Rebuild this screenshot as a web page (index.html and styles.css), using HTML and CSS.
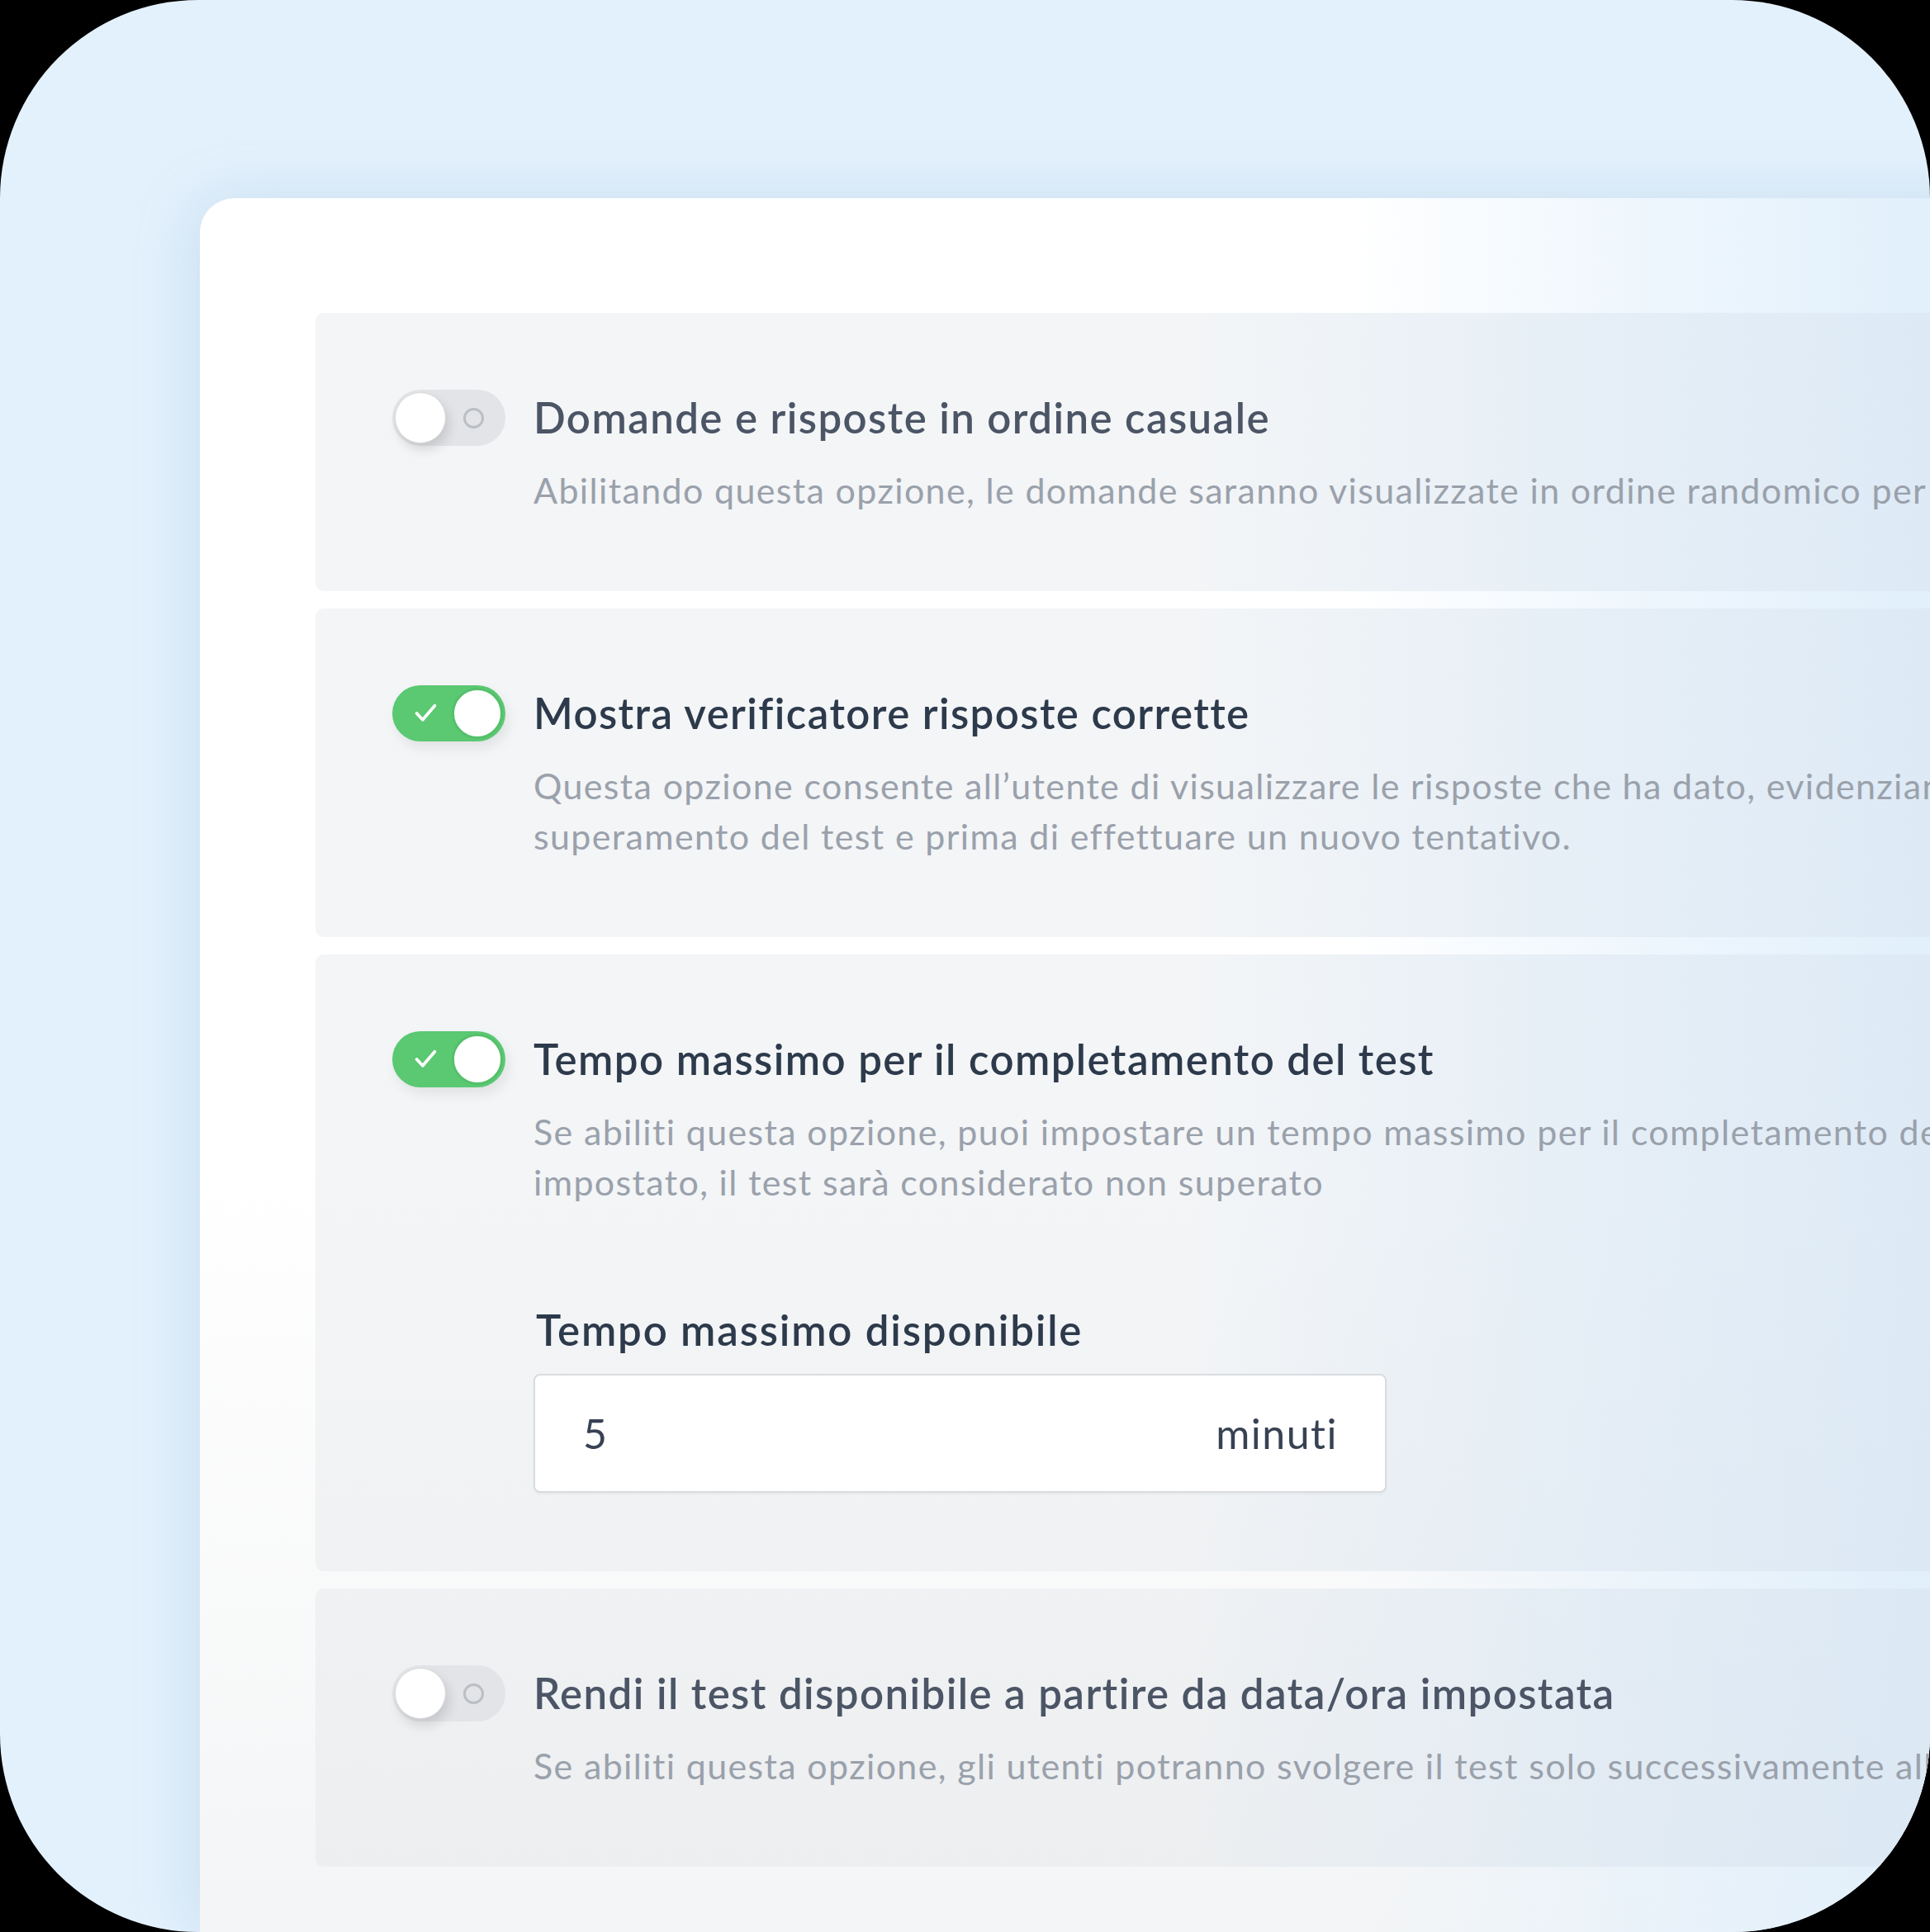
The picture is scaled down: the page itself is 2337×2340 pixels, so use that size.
FILE: index.html
```html
<!DOCTYPE html>
<html lang="it">

<head>
    <meta charset="UTF-8">
    <meta name="viewport" content="width=device-width, initial-scale=1.0">
    <title>Impostazioni test</title>
    <link rel="stylesheet" href="styles.css">
</head>

<body>

    <div class="frame">
        <div class="card">

            <div class="option">
                <span class="switch">
                    <span class="switch-off-mark"></span>
                    <span class="knob"></span>
                </span>
                <div class="option-body">
                    <h2 class="option-title muted">Domande e risposte in ordine casuale</h2>
                    <p class="option-desc">Abilitando questa opzione, le domande saranno visualizzate in ordine randomico per ogni utente che svolge il test.</p>
                </div>
            </div>

            <div class="option">
                <span class="switch on">
                    <svg class="check" viewBox="0 0 26 24" width="27" height="25">
                        <path d="M2.5 12.5 L9.5 20 L23.5 3.5" fill="none" stroke="#fff" stroke-width="3.6" stroke-linecap="round" stroke-linejoin="round"/>
                    </svg>
                    <span class="knob"></span>
                </span>
                <div class="option-body">
                    <h2 class="option-title">Mostra verificatore risposte corrette</h2>
                    <p class="option-desc">Questa opzione consente all’utente di visualizzare le risposte che ha dato, evidenziando quelle corrette, dopo il<br>superamento del test e prima di effettuare un nuovo tentativo.</p>
                </div>
            </div>

            <div class="option">
                <span class="switch on">
                    <svg class="check" viewBox="0 0 26 24" width="27" height="25">
                        <path d="M2.5 12.5 L9.5 20 L23.5 3.5" fill="none" stroke="#fff" stroke-width="3.6" stroke-linecap="round" stroke-linejoin="round"/>
                    </svg>
                    <span class="knob"></span>
                </span>
                <div class="option-body">
                    <h2 class="option-title">Tempo massimo per il completamento del test</h2>
                    <p class="option-desc">Se abiliti questa opzione, puoi impostare un tempo massimo per il completamento del test. Superato il tempo<br>impostato, il test sarà considerato non superato</p>

                    <label class="field-label" for="max-time">Tempo massimo disponibile</label>
                    <div class="field">
                        <input id="max-time" type="text" value="5">
                        <span class="field-unit">minuti</span>
                    </div>
                </div>
            </div>

            <div class="option">
                <span class="switch">
                    <span class="switch-off-mark"></span>
                    <span class="knob"></span>
                </span>
                <div class="option-body">
                    <h2 class="option-title muted">Rendi il test disponibile a partire da data/ora impostata</h2>
                    <p class="option-desc">Se abiliti questa opzione, gli utenti potranno svolgere il test solo successivamente alla data e all’ora impostate.</p>
                </div>
            </div>

        </div>
    </div>

</body>

</html>
```

FILE: styles.css
```css
* {
    box-sizing: border-box;
}

body {
    margin: 0;
    background-color: #000;
    font-family: Lato, "Open Sans", sans-serif;
}

.frame {
    width: 2337px;
    height: 2340px;
    overflow: hidden;
    border-radius: 240px;
    background-color: #e3f1fc;
    padding: 240px 0 0 242px;
}

/* the blue tint on the right is fixed to the window so every box shares it */
.card {
    width: 2300px;
    height: 2100px;
    border-radius: 42px 0 0 0;
    background:
        linear-gradient(to right, rgba(226, 240, 252, 0) 70%, rgba(226, 240, 252, 0.6) 86%, rgba(224, 239, 251, 0.95) 100%) fixed,
        linear-gradient(to bottom, #ffffff 60%, #f4f5f6 100%) fixed;
    box-shadow: -10px 0 70px rgba(120, 160, 200, 0.22);
    padding: 139px 0 0 140px;
}

.option {
    display: grid;
    grid-template-columns: 137px 1fr;
    column-gap: 34px;
    align-items: start;
    background:
        linear-gradient(to right, rgba(214, 231, 246, 0) 62%, rgba(214, 231, 246, 0.45) 82%, rgba(212, 229, 245, 0.7) 100%) fixed,
        linear-gradient(to bottom, #f3f5f7 62%, #eceef0 100%) fixed;
    border-radius: 10px;
    padding: 93px 0 92px 93px;
    margin-bottom: 21px;
}

/* toggle */
.switch {
    position: relative;
    display: block;
    width: 137px;
    height: 68px;
    border-radius: 34px;
    background-color: #e2e4e7;
}

.switch .knob {
    position: absolute;
    top: 3px;
    left: 3px;
    width: 62px;
    height: 62px;
    border-radius: 50%;
    background-color: #fff;
    border: 1.5px solid #d6d8db;
    box-shadow: 4px 8px 14px rgba(0, 0, 0, 0.12);
}

.switch-off-mark {
    position: absolute;
    top: 22px;
    left: 86px;
    width: 25px;
    height: 25px;
    border-radius: 50%;
    border: 3px solid #bbbec2;
}

.switch.on {
    background-color: #5bc872;
    box-shadow: 4px 8px 16px rgba(0, 0, 0, 0.08);
}

.switch.on .knob {
    left: auto;
    right: 3px;
    border: 3px solid #55c06b;
    box-shadow: none;
}

.switch .check {
    position: absolute;
    left: 27px;
    top: 21px;
}

/* texts */
.option-title {
    margin: 0;
    font-size: 51px;
    line-height: 68px;
    font-weight: 600;
    letter-spacing: 1.4px;
    color: #2d3a4b;
    white-space: nowrap;
}

.option-title.muted {
    color: #4b5565;
}

.option-desc {
    margin: 23px 0 0;
    font-size: 43px;
    line-height: 61px;
    letter-spacing: 1.35px;
    color: #9aa1ab;
    white-space: nowrap;
}

.field-label {
    display: block;
    margin: 119px 0 0 3px;
    font-size: 51px;
    line-height: 60px;
    font-weight: 600;
    letter-spacing: 1.8px;
    color: #2d3a4b;
}

.field {
    display: flex;
    align-items: center;
    width: 1033px;
    height: 144px;
    margin-top: 23px;
    margin-bottom: 3px;
    padding: 0 57px 0 58px;
    background-color: #fff;
    border: 2px solid #d9dcdf;
    border-radius: 8px;
    box-shadow: 0 2px 3px rgba(0, 0, 0, 0.04);
}

.field input {
    flex: 1;
    min-width: 0;
    border: none;
    padding: 0;
    background: transparent;
    font-family: inherit;
    font-size: 50px;
    color: #374253;
}

.field input:focus {
    outline: none;
}

.field-unit {
    font-size: 50px;
    letter-spacing: 1.5px;
    color: #374253;
}
```
